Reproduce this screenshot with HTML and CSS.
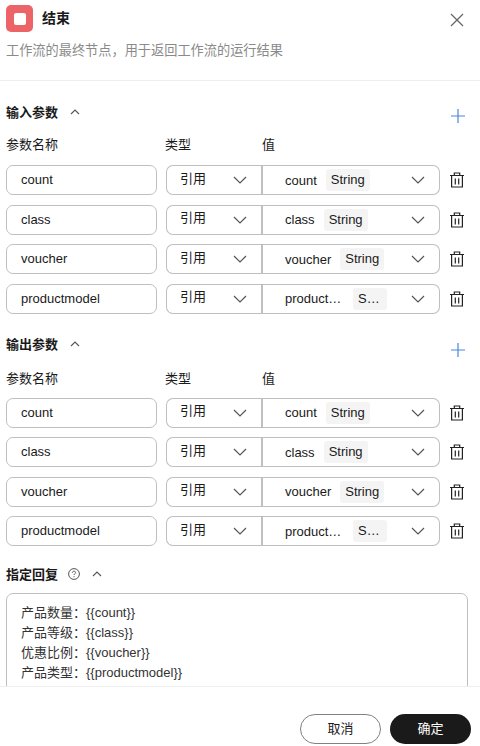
FILE: index.html
```html
<!DOCTYPE html>
<html lang="en">
<head>
  <meta charset="UTF-8" />
  <title>结束</title>
  <link rel="stylesheet" href="styles.css">
</head>
<body>
  <div class="panel">
    <div class="panel-head">
      <div class="title-row">
        <span class="node-icon"><span class="node-square"></span></span>
        <span class="title">结束</span>
        <svg class="close" width="14" height="14" viewBox="0 0 14 14"><path d="M1 1l12 12M13 1L1 13" /></svg>
      </div>
      <p class="desc">工作流的最终节点，用于返回工作流的运行结果</p>
    </div>

    <div class="panel-body">
      <div class="section section-input">
        <div class="section-head">
          <span class="section-title">输入参数</span>
          <svg class="caret" width="10" height="6" viewBox="0 0 10 6"><path d="M1 5l4-4 4 4" /></svg>
          <svg class="plus" width="14" height="14" viewBox="0 0 14 14"><path d="M7 0v14M0 7h14" /></svg>
        </div>
        <div class="col-labels"><span class="col-name">参数名称</span><span class="col-type">类型</span><span>值</span></div>
        <div class="rows">
          <div class="row">
            <div class="name-input">count</div>
            <div class="type-select"><span class="type-label">引用</span><svg class="chev" width="14" height="8" viewBox="0 0 14 8"><path d="M1 1l6 6 6-6" /></svg></div>
            <div class="value-select"><span class="val">count</span><span class="tag">String</span><svg class="chev" width="14" height="8" viewBox="0 0 14 8"><path d="M1 1l6 6 6-6" /></svg></div>
            <svg class="trash" width="16" height="16" viewBox="0 0 16 16"><path d="M1 3.5h14M5.3 3.5V1h5.4v2.5M2.6 3.5V15h10.8V3.5M6.3 6.5v6M9.7 6.5v6" /></svg>
          </div>
          <div class="row">
            <div class="name-input">class</div>
            <div class="type-select"><span class="type-label">引用</span><svg class="chev" width="14" height="8" viewBox="0 0 14 8"><path d="M1 1l6 6 6-6" /></svg></div>
            <div class="value-select"><span class="val">class</span><span class="tag">String</span><svg class="chev" width="14" height="8" viewBox="0 0 14 8"><path d="M1 1l6 6 6-6" /></svg></div>
            <svg class="trash" width="16" height="16" viewBox="0 0 16 16"><path d="M1 3.5h14M5.3 3.5V1h5.4v2.5M2.6 3.5V15h10.8V3.5M6.3 6.5v6M9.7 6.5v6" /></svg>
          </div>
          <div class="row">
            <div class="name-input">voucher</div>
            <div class="type-select"><span class="type-label">引用</span><svg class="chev" width="14" height="8" viewBox="0 0 14 8"><path d="M1 1l6 6 6-6" /></svg></div>
            <div class="value-select"><span class="val">voucher</span><span class="tag">String</span><svg class="chev" width="14" height="8" viewBox="0 0 14 8"><path d="M1 1l6 6 6-6" /></svg></div>
            <svg class="trash" width="16" height="16" viewBox="0 0 16 16"><path d="M1 3.5h14M5.3 3.5V1h5.4v2.5M2.6 3.5V15h10.8V3.5M6.3 6.5v6M9.7 6.5v6" /></svg>
          </div>
          <div class="row">
            <div class="name-input">productmodel</div>
            <div class="type-select"><span class="type-label">引用</span><svg class="chev" width="14" height="8" viewBox="0 0 14 8"><path d="M1 1l6 6 6-6" /></svg></div>
            <div class="value-select"><span class="val val-cut">product…</span><span class="tag tag-cut">S…</span><svg class="chev" width="14" height="8" viewBox="0 0 14 8"><path d="M1 1l6 6 6-6" /></svg></div>
            <svg class="trash" width="16" height="16" viewBox="0 0 16 16"><path d="M1 3.5h14M5.3 3.5V1h5.4v2.5M2.6 3.5V15h10.8V3.5M6.3 6.5v6M9.7 6.5v6" /></svg>
          </div>
        </div>
      </div>

      <div class="section section-output">
        <div class="section-head">
          <span class="section-title">输出参数</span>
          <svg class="caret" width="10" height="6" viewBox="0 0 10 6"><path d="M1 5l4-4 4 4" /></svg>
          <svg class="plus" width="14" height="14" viewBox="0 0 14 14"><path d="M7 0v14M0 7h14" /></svg>
        </div>
        <div class="col-labels"><span class="col-name">参数名称</span><span class="col-type">类型</span><span>值</span></div>
        <div class="rows">
          <div class="row">
            <div class="name-input">count</div>
            <div class="type-select"><span class="type-label">引用</span><svg class="chev" width="14" height="8" viewBox="0 0 14 8"><path d="M1 1l6 6 6-6" /></svg></div>
            <div class="value-select"><span class="val">count</span><span class="tag">String</span><svg class="chev" width="14" height="8" viewBox="0 0 14 8"><path d="M1 1l6 6 6-6" /></svg></div>
            <svg class="trash" width="16" height="16" viewBox="0 0 16 16"><path d="M1 3.5h14M5.3 3.5V1h5.4v2.5M2.6 3.5V15h10.8V3.5M6.3 6.5v6M9.7 6.5v6" /></svg>
          </div>
          <div class="row">
            <div class="name-input">class</div>
            <div class="type-select"><span class="type-label">引用</span><svg class="chev" width="14" height="8" viewBox="0 0 14 8"><path d="M1 1l6 6 6-6" /></svg></div>
            <div class="value-select"><span class="val">class</span><span class="tag">String</span><svg class="chev" width="14" height="8" viewBox="0 0 14 8"><path d="M1 1l6 6 6-6" /></svg></div>
            <svg class="trash" width="16" height="16" viewBox="0 0 16 16"><path d="M1 3.5h14M5.3 3.5V1h5.4v2.5M2.6 3.5V15h10.8V3.5M6.3 6.5v6M9.7 6.5v6" /></svg>
          </div>
          <div class="row">
            <div class="name-input">voucher</div>
            <div class="type-select"><span class="type-label">引用</span><svg class="chev" width="14" height="8" viewBox="0 0 14 8"><path d="M1 1l6 6 6-6" /></svg></div>
            <div class="value-select"><span class="val">voucher</span><span class="tag">String</span><svg class="chev" width="14" height="8" viewBox="0 0 14 8"><path d="M1 1l6 6 6-6" /></svg></div>
            <svg class="trash" width="16" height="16" viewBox="0 0 16 16"><path d="M1 3.5h14M5.3 3.5V1h5.4v2.5M2.6 3.5V15h10.8V3.5M6.3 6.5v6M9.7 6.5v6" /></svg>
          </div>
          <div class="row">
            <div class="name-input">productmodel</div>
            <div class="type-select"><span class="type-label">引用</span><svg class="chev" width="14" height="8" viewBox="0 0 14 8"><path d="M1 1l6 6 6-6" /></svg></div>
            <div class="value-select"><span class="val val-cut">product…</span><span class="tag tag-cut">S…</span><svg class="chev" width="14" height="8" viewBox="0 0 14 8"><path d="M1 1l6 6 6-6" /></svg></div>
            <svg class="trash" width="16" height="16" viewBox="0 0 16 16"><path d="M1 3.5h14M5.3 3.5V1h5.4v2.5M2.6 3.5V15h10.8V3.5M6.3 6.5v6M9.7 6.5v6" /></svg>
          </div>
        </div>
      </div>

      <div class="reply">
        <div class="reply-head">
          <span class="section-title">指定回复</span>
          <svg class="help" width="12" height="12" viewBox="0 0 12 12"><circle cx="6" cy="6" r="5.4" /><path d="M4.4 4.7c0-.9.7-1.5 1.6-1.5s1.6.6 1.6 1.4c0 1.2-1.6 1.2-1.6 2.4M6 8.2v1" /></svg>
          <svg class="caret" width="10" height="6" viewBox="0 0 10 6"><path d="M1 5l4-4 4 4" /></svg>
        </div>
        <div class="reply-box">
          <div>产品数量：{{count}}</div>
          <div>产品等级：{{class}}</div>
          <div>优惠比例：{{voucher}}</div>
          <div>产品类型：{{productmodel}}</div>
        </div>
      </div>
    </div>

    <div class="panel-foot">
      <button class="btn btn-cancel"><span class="btn-text">取消</span></button>
      <button class="btn btn-ok"><span class="btn-text">确定</span></button>
    </div>
  </div>
</body>
</html>
```

FILE: styles.css
```css
* {
  box-sizing: border-box;
}
body {
  margin: 0;
  background: #fff;
  color: #1a1a1a;
  font-family: "Liberation Sans", "Noto Sans CJK SC", sans-serif;
  font-size: 13px;
}
.panel {
  width: 480px;
  height: 746px;
  display: flex;
  flex-direction: column;
  overflow: hidden;
}
.panel-head {
  height: 81px;
  flex: none;
  padding: 5px 16px 0 6px;
  border-bottom: 1px solid #eeeeee;
}
.title-row {
  display: flex;
  align-items: center;
  height: 27px;
}
.node-icon {
  width: 27px;
  height: 27px;
  border-radius: 5px;
  background: #ec6468;
  display: flex;
  align-items: center;
  justify-content: center;
}
.node-square {
  width: 12px;
  height: 12px;
  border-radius: 2px;
  background: #fff;
}
.title {
  margin-left: 9px;
  margin-bottom: 4px;
  font-size: 14px;
  font-weight: bold;
}
.close {
  margin-left: auto;
  margin-top: 3px;
  fill: none;
  stroke: #666;
  stroke-width: 1.3;
}
.desc {
  margin: 10px 0 0;
  color: #8a8a8a;
  font-size: 13.2px;
  line-height: 18px;
}
.panel-body {
  flex: 1;
  min-height: 0;
  overflow: hidden;
  padding: 0 6px;
}
.section-input {
  padding-top: 21px;
}
.section-output {
  padding-top: 20.7px;
}
.section-head {
  display: flex;
  align-items: center;
  height: 20px;
}
.section-title {
  margin-bottom: 2px;
  font-size: 13px;
  font-weight: bold;
}
.caret {
  margin-left: 12px;
  fill: none;
  stroke: #555;
  stroke-width: 1.1;
}
.plus {
  margin-left: auto;
  margin-right: 9px;
  margin-top: 7px;
  fill: none;
  stroke: #4a86e0;
  stroke-width: 1.2;
}
.section-output .plus {
  margin-top: 12px;
}
.col-labels {
  display: flex;
  margin-top: 14px;
  height: 18px;
  line-height: 18px;
}
.section-output .col-labels {
  margin-top: 15.5px;
}
.col-name {
  width: 159px;
}
.col-type {
  width: 97px;
}
.rows {
  margin-top: 11.3px;
  display: flex;
  flex-direction: column;
  gap: 9.5px;
}
.section-output .rows {
  margin-top: 10px;
}
.row {
  display: flex;
  align-items: center;
  height: 30px;
}
.name-input {
  width: 151px;
  height: 30px;
  line-height: 28px;
  padding-left: 14px;
  border: 1px solid #bfbfbf;
  border-radius: 7px;
}
.type-select {
  width: 95px;
  height: 30px;
  margin-left: 9px;
  padding: 0 14px 0 13px;
  display: flex;
  align-items: center;
  justify-content: space-between;
  border: 1px solid #bfbfbf;
  border-right: none;
  border-radius: 7px 0 0 7px;
}
.type-label {
  margin-bottom: 6px;
}
.value-select {
  width: 179px;
  height: 30px;
  padding: 0 14px 0 22px;
  display: flex;
  align-items: center;
  border: 1px solid #bfbfbf;
  border-left-width: 2px;
  border-radius: 0 7px 7px 0;
}
.val {
  margin-right: 9px;
}
.val-cut {
  width: 60px;
  margin-right: 8px;
  white-space: nowrap;
}
.tag {
  height: 22px;
  line-height: 22px;
  padding: 0 5px;
  border-radius: 3px;
  background: #f4f4f4;
}
.tag-cut {
  width: 34px;
  white-space: nowrap;
}
.chev {
  margin-left: auto;
  fill: none;
  stroke: #555;
  stroke-width: 1.2;
}
.trash {
  margin-left: 9px;
  fill: none;
  stroke: #222;
  stroke-width: 1.2;
}
.reply {
  padding-top: 17.6px;
}
.reply-head {
  display: flex;
  align-items: center;
  height: 20px;
}
.help {
  margin-left: 10px;
  fill: none;
  stroke: #555;
  stroke-width: 1;
}
.reply-box {
  width: 462px;
  height: 130px;
  margin-top: 9px;
  padding: 9px 14px;
  border: 1px solid #bfbfbf;
  border-radius: 7px;
  line-height: 20px;
  color: #333;
}
.panel-foot {
  height: 60px;
  flex: none;
  padding: 27px 9px 0 0;
  display: flex;
  justify-content: flex-end;
  gap: 9px;
  border-top: 1px solid #eeeeee;
}
.btn {
  width: 81px;
  height: 30px;
  border-radius: 15px;
  font-family: inherit;
  font-size: 13px;
}
.btn-text {
  display: block;
  margin-bottom: 3px;
}
.btn-cancel {
  background: #fff;
  color: #1a1a1a;
  border: 1px solid #808080;
}
.btn-ok {
  background: #1a1a1a;
  color: #fff;
  border: none;
}
```
